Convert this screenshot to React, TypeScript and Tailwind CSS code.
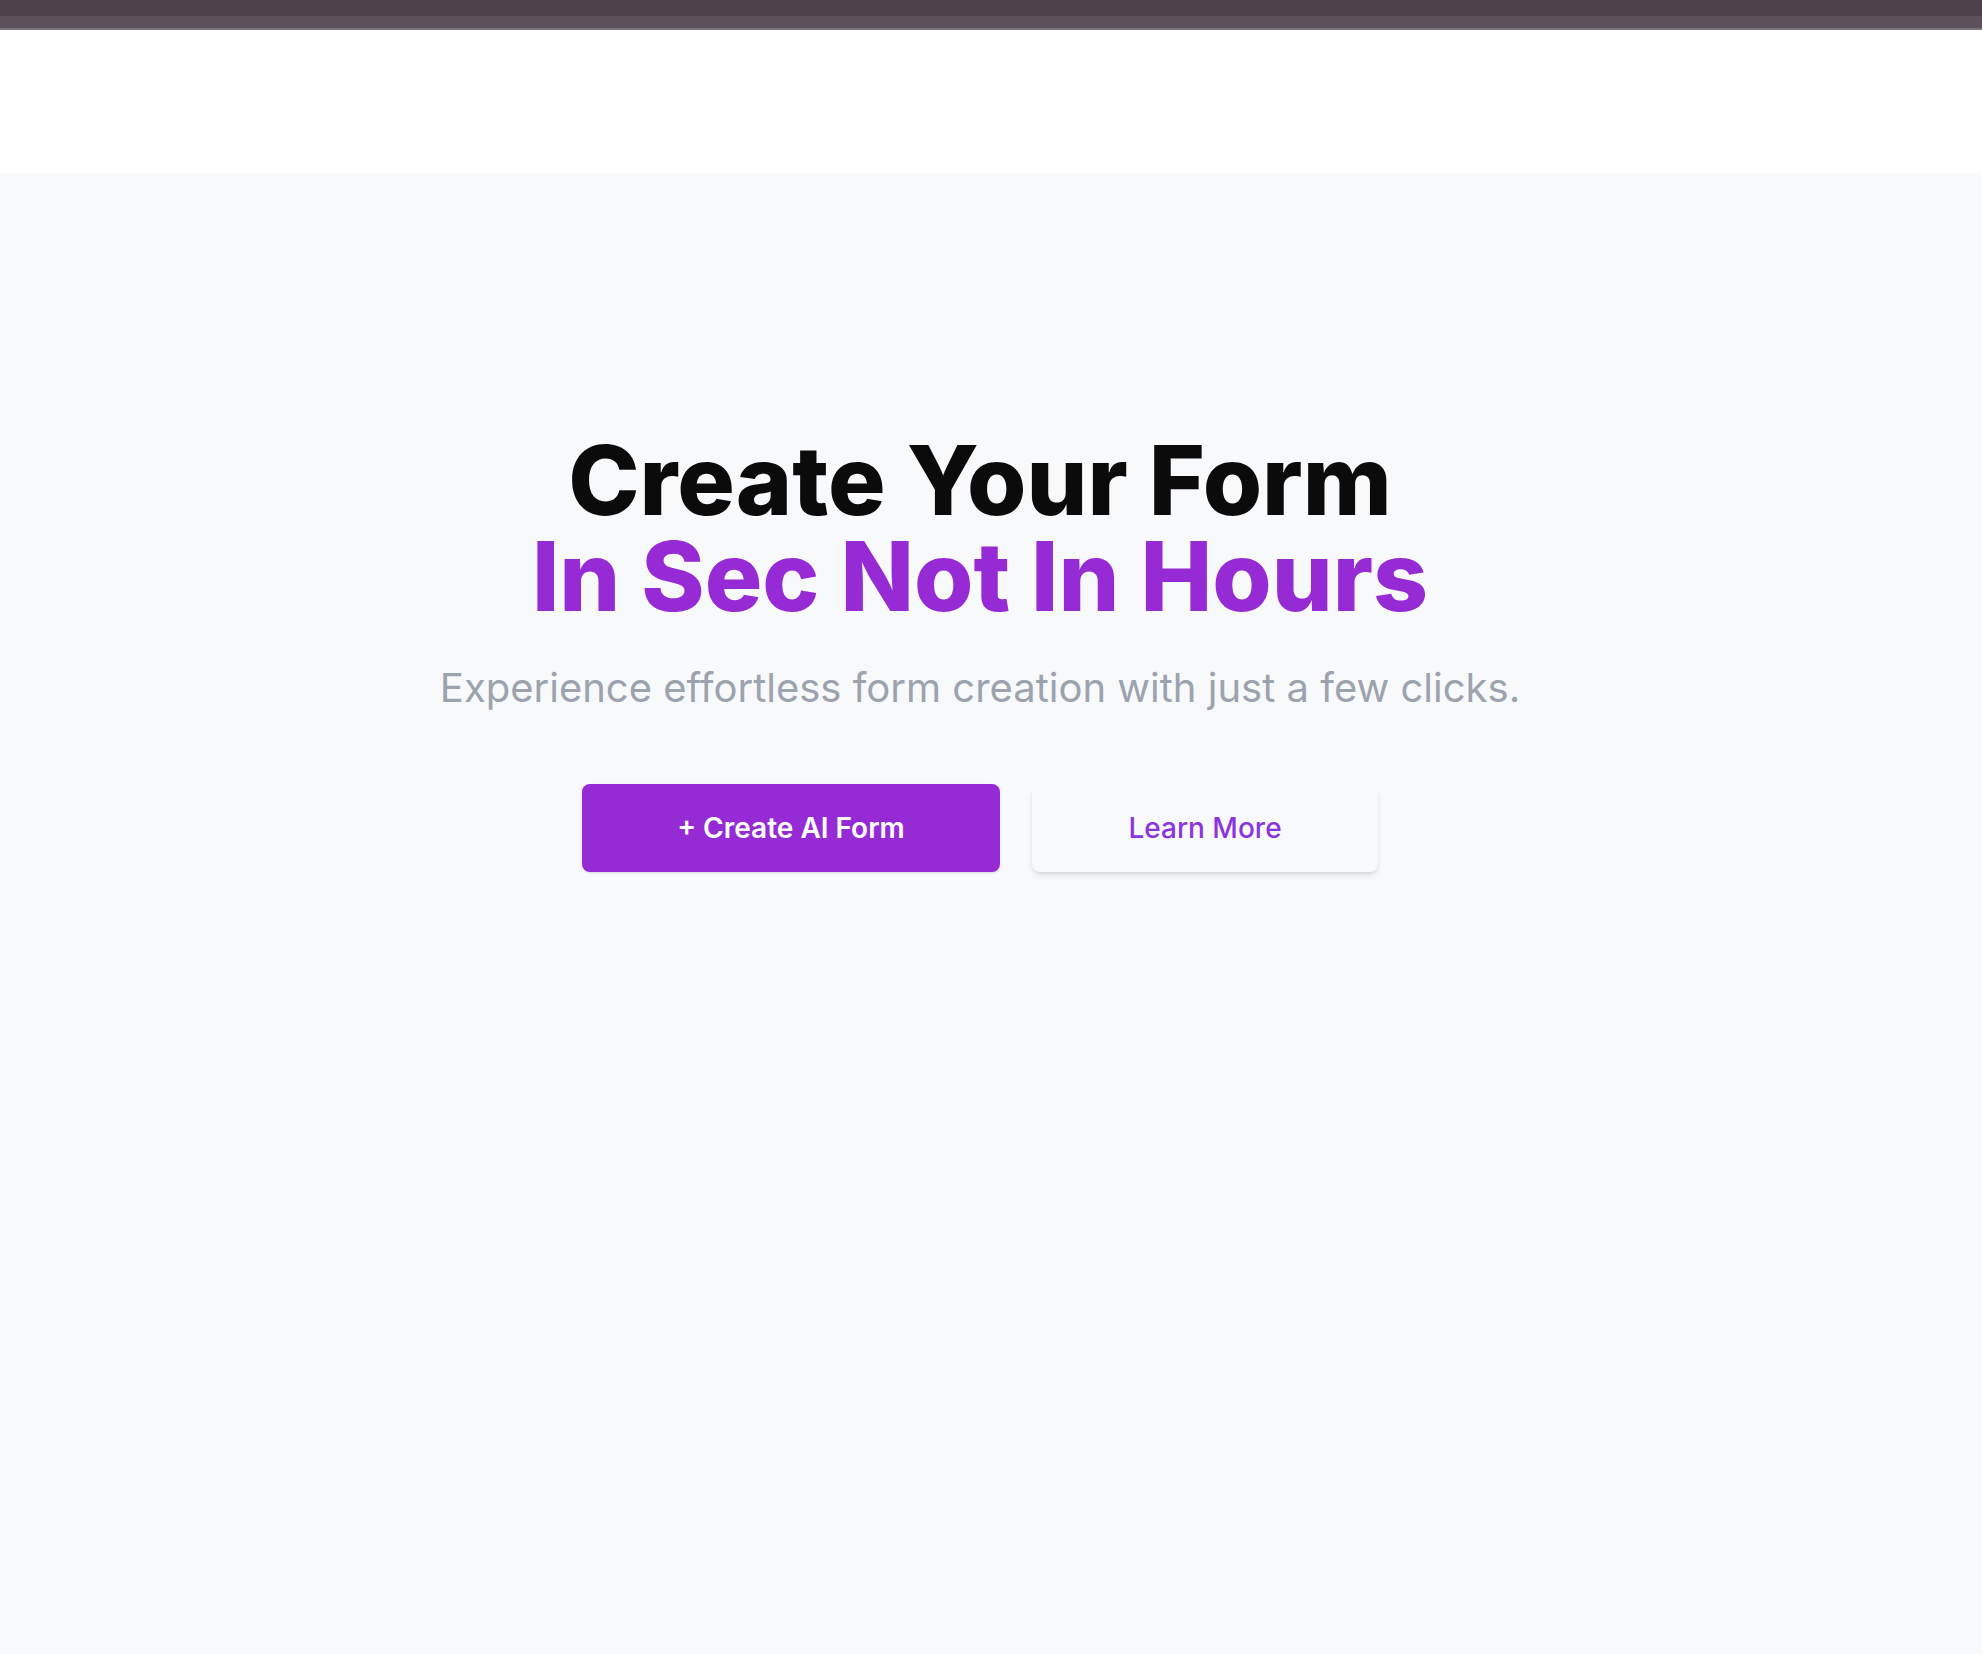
import React from "react";

export default function App() {
  return (
    <div className="min-h-[1654px] w-full flex flex-col bg-[#f8f9fb]" style={{ fontFamily: "Inter, 'Noto Sans', sans-serif" }}>
      <div className="h-[16px] bg-[#4d424b]" />
      <div className="h-[12px] bg-[#5d525c]" />
      <div className="h-[2px] bg-[#7a717a]" />
      <header className="h-[143px] bg-white" />
      <main className="flex flex-col items-center pt-[259px] pr-[22px]">
        <h1 className="text-center text-[96px] leading-[96px] font-extrabold tracking-normal">
          <span className="block text-[#0b0b0b]">Create Your Form</span>
          <span className="block text-[#962bd6]">In Sec Not In Hours</span>
        </h1>
        <p className="mt-[40px] text-[40px] leading-[48px] text-[#9ca3af] font-normal">
          Experience effortless form creation with just a few clicks.
        </p>
        <div className="mt-[72px] flex gap-[32px]">
          <button className="w-[418px] h-[88px] rounded-[8px] bg-[#962bd6] text-white text-[28px] font-semibold shadow-sm">
            + Create AI Form
          </button>
          <button className="w-[346px] h-[88px] rounded-[8px] bg-[#f8f9fb] text-[#8b34e0] text-[28px] font-medium shadow-md">
            Learn More
          </button>
        </div>
      </main>
    </div>
  );
}
